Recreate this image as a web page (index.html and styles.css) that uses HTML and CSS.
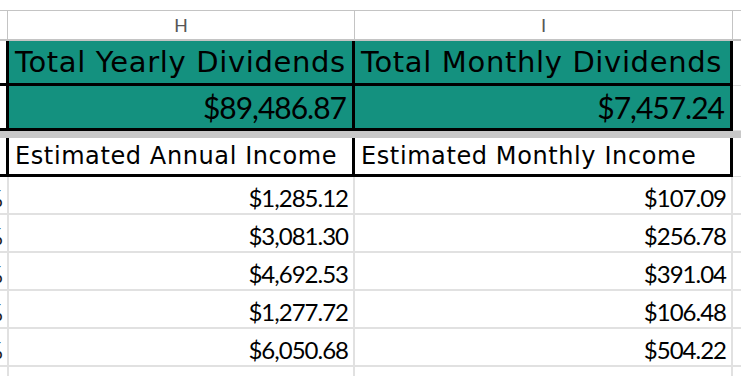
FILE: index.html
```html
<!DOCTYPE html>
<html>
<head>
<meta charset="utf-8">
<link rel="stylesheet" href="styles.css">
</head>
<body>
<div class="sheet">
  <div class="row colhead">
    <div class="c stub"></div>
    <div class="c h">H</div>
    <div class="c i">I</div>
    <div class="c rest"></div>
  </div>

  <div class="row bold-row teal">
    <div class="c stub"></div>
    <div class="c h label">Total Yearly Dividends</div>
    <div class="c i label">Total Monthly Dividends</div>
    <div class="c rest"></div>
  </div>
  <div class="row bold-row teal">
    <div class="c stub"></div>
    <div class="c h total">$89,486.87</div>
    <div class="c i total">$7,457.24</div>
    <div class="c rest"></div>
  </div>

  <div class="freeze"></div>

  <div class="row bold-row plain">
    <div class="c stub"></div>
    <div class="c h label sub">Estimated Annual Income</div>
    <div class="c i label sub">Estimated Monthly Income</div>
    <div class="c rest"></div>
  </div>

  <div class="row data">
    <div class="c stub"><span class="pct">%</span></div>
    <div class="c h val">$1,285.12</div>
    <div class="c i val">$107.09</div>
    <div class="c rest"></div>
  </div>
  <div class="row data">
    <div class="c stub"><span class="pct">%</span></div>
    <div class="c h val">$3,081.30</div>
    <div class="c i val">$256.78</div>
    <div class="c rest"></div>
  </div>
  <div class="row data">
    <div class="c stub"><span class="pct">%</span></div>
    <div class="c h val">$4,692.53</div>
    <div class="c i val">$391.04</div>
    <div class="c rest"></div>
  </div>
  <div class="row data">
    <div class="c stub"><span class="pct">%</span></div>
    <div class="c h val">$1,277.72</div>
    <div class="c i val">$106.48</div>
    <div class="c rest"></div>
  </div>
  <div class="row data">
    <div class="c stub"><span class="pct">%</span></div>
    <div class="c h val">$6,050.68</div>
    <div class="c i val">$504.22</div>
    <div class="c rest"></div>
  </div>
  <div class="row data last">
    <div class="c stub"></div>
    <div class="c h"></div>
    <div class="c i"></div>
    <div class="c rest"></div>
  </div>
</div>
</body>
</html>
```

FILE: styles.css
```css
html, body {
  margin: 0;
  padding: 0;
  background: #ffffff;
}

body {
  width: 741px;
  height: 376px;
  overflow: hidden;
  font-family: "Lato", "Liberation Sans", sans-serif;
  color: #000;
}

.sheet {
  padding-top: 10px;
}

.row {
  display: flex;
  box-sizing: border-box;
}

.c {
  box-sizing: border-box;
  flex: none;
  overflow: hidden;
  white-space: nowrap;
  display: flex;
}

.rest {
  flex: 1 1 auto;
}

/* column header row */
.colhead {
  height: 31px;
  border-top: 1px solid #c4c4c4;
  border-bottom: 2px solid #c4c4c4;
}

.colhead .stub {
  width: 7px;
}

.colhead .h {
  width: 348px;
  border-left: 1px solid #c4c4c4;
  border-right: 1px solid #c4c4c4;
}

.colhead .i {
  width: 378px;
  border-right: 1px solid #c4c4c4;
}

.colhead .h,
.colhead .i {
  justify-content: center;
  align-items: center;
  font-family: "Roboto", "Liberation Sans", sans-serif;
  font-size: 19px;
  color: #575757;
}

/* rows with thick black borders */
.bold-row .c {
  border-bottom: 3px solid #000;
}

.bold-row .rest {
  border-bottom: 1px solid #e1e1e1;
}

.bold-row .stub {
  width: 6px;
}

.bold-row .h {
  width: 349px;
  border-left: 3px solid #000;
  border-right: 3px solid #000;
}

.bold-row .i {
  width: 378px;
  border-right: 3px solid #000;
}

.teal {
  height: 45px;
}

.teal .h,
.teal .i {
  background: #14917f;
}

.plain {
  height: 39px;
}

.label {
  align-items: center;
  padding-left: 6px;
  padding-bottom: 1px;
  font-family: "DejaVu Sans", "Liberation Sans", sans-serif;
  font-size: 29px;
  letter-spacing: 0.65px;
}

.label.sub {
  font-size: 24px;
  letter-spacing: 0.6px;
  padding-bottom: 0;
}

.total {
  align-items: center;
  justify-content: flex-end;
  padding-right: 6px;
  font-size: 30px;
  letter-spacing: -1px;
}

.freeze {
  height: 7px;
  background: #c8c8c8;
}

/* data rows */
.data {
  height: 38px;
}

.data .c {
  border-bottom: 2px solid #e1e1e1;
}

.data .stub {
  width: 7px;
  justify-content: flex-end;
  align-items: flex-end;
}

.data .h {
  width: 348px;
  border-left: 2px solid #e1e1e1;
  border-right: 2px solid #e1e1e1;
}

.data .i {
  width: 378px;
  border-right: 2px solid #e1e1e1;
}

.data.last {
  height: 20px;
}

.pct {
  font-size: 24px;
  line-height: 1;
  padding-right: 4px;
  padding-bottom: 3px;
  color: #1a1a1a;
}

.val {
  justify-content: flex-end;
  align-items: flex-end;
  padding-right: 5px;
  padding-bottom: 3px;
  font-size: 24px;
  line-height: 1;
  letter-spacing: -1px;
}
```
